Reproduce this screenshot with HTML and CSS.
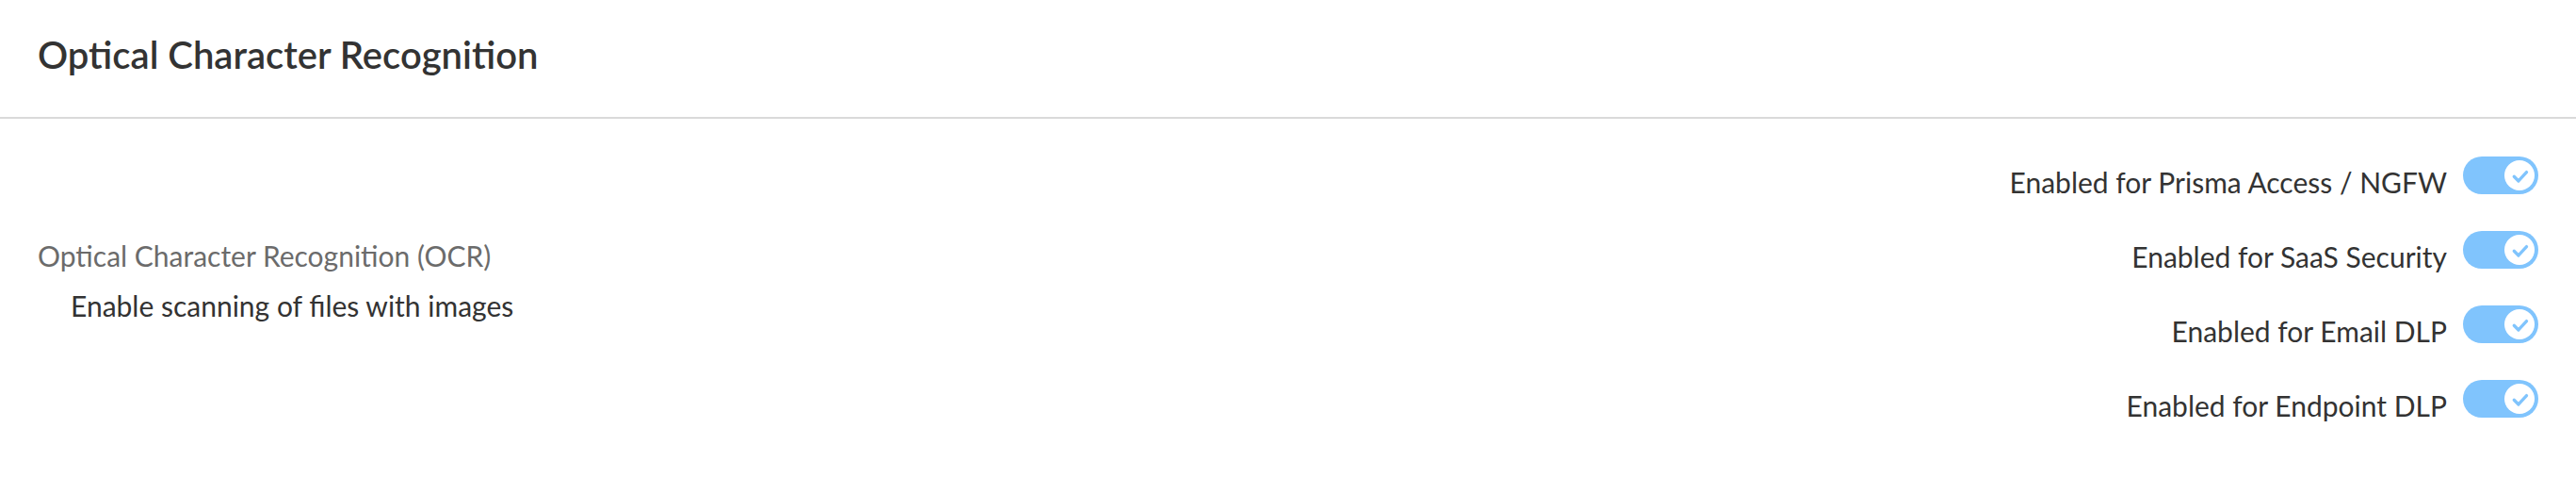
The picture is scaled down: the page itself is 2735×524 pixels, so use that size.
FILE: index.html
```html
<!DOCTYPE html>
<html lang="en">
<head>
  <meta charset="UTF-8" />
  <title>Optical Character Recognition</title>
  <link rel="stylesheet" href="styles.css">
</head>
<body>
  <header class="panel-header">
    <h1>Optical Character Recognition</h1>
  </header>
  <section class="panel-body">
    <div class="setting-info">
      <div class="setting-name">Optical Character Recognition (OCR)</div>
      <div class="setting-desc">Enable scanning of files with images</div>
    </div>
    <div class="toggle-list">
      <label class="toggle-row">
        <span class="toggle-label">Enabled for Prisma Access / NGFW</span>
        <span class="toggle on"><span class="knob"><svg viewBox="0 0 16 16"><path d="M4 8.5l3 3 5.5-6"/></svg></span></span>
      </label>
      <label class="toggle-row">
        <span class="toggle-label">Enabled for SaaS Security</span>
        <span class="toggle on"><span class="knob"><svg viewBox="0 0 16 16"><path d="M4 8.5l3 3 5.5-6"/></svg></span></span>
      </label>
      <label class="toggle-row">
        <span class="toggle-label">Enabled for Email DLP</span>
        <span class="toggle on"><span class="knob"><svg viewBox="0 0 16 16"><path d="M4 8.5l3 3 5.5-6"/></svg></span></span>
      </label>
      <label class="toggle-row">
        <span class="toggle-label">Enabled for Endpoint DLP</span>
        <span class="toggle on"><span class="knob"><svg viewBox="0 0 16 16"><path d="M4 8.5l3 3 5.5-6"/></svg></span></span>
      </label>
    </div>
  </section>
</body>
</html>
```

FILE: styles.css
```css
:root {
  --text: #333;
  --muted: #6b6b6b;
  --toggle: #80c4fd;
  --divider: #dadada;
}
body {
  margin: 0;
  font-family: Lato, 'Open Sans', Arial, sans-serif;
  background: #fff;
  color: var(--text);
}
.panel-header {
  height: 126px;
  box-sizing: border-box;
  padding: 34px 40px 0 40px;
  border-bottom: 2px solid var(--divider);
}
.panel-header h1 {
  margin: 0;
  font-size: 40px;
  font-weight: 600;
  line-height: 1.2;
}
.panel-body {
  display: flex;
  justify-content: space-between;
  align-items: center;
  padding: 40px 40px;
}
.setting-info {
  margin-bottom: 14px;
}
.setting-name {
  font-size: 30px;
  line-height: 1.2;
  color: var(--muted);
}
.setting-desc {
  font-size: 30px;
  line-height: 1.2;
  margin: 17px 0 0 35px;
}
.toggle-list {
  display: flex;
  flex-direction: column;
  gap: 39px;
}
.toggle-row {
  display: flex;
  justify-content: flex-end;
  align-items: flex-start;
  height: 40px;
  gap: 17px;
  font-size: 30px;
}
.toggle-label {
  line-height: 1;
  margin-top: 12px;
}
.toggle {
  width: 80px;
  height: 40px;
  border-radius: 20px;
  background: var(--toggle);
  display: flex;
  align-items: center;
  justify-content: flex-end;
  padding: 0 4px;
  box-sizing: border-box;
}
.knob {
  width: 32px;
  height: 32px;
  border-radius: 50%;
  background: #fff;
  display: flex;
  align-items: center;
  justify-content: center;
}
.knob svg {
  width: 25px;
  height: 25px;
  fill: none;
  stroke: var(--toggle);
  stroke-width: 2.1;
  stroke-linecap: round;
  stroke-linejoin: round;
}
```
